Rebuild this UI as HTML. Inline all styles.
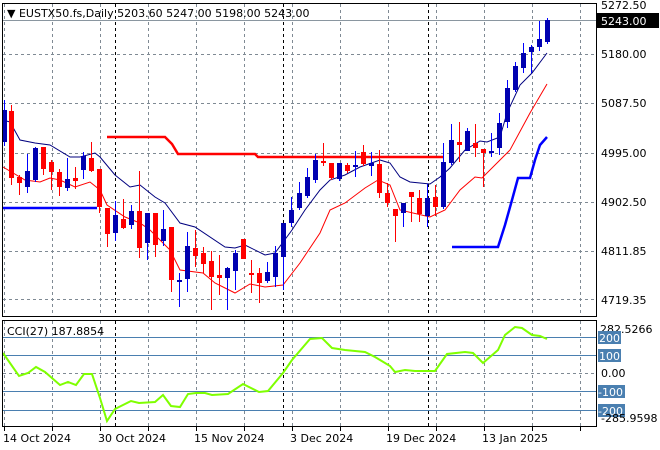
<!DOCTYPE html>
<html><head><meta charset="utf-8"><style>
html,body{margin:0;padding:0;background:#fff;}
svg{display:block;}
text{font-family:"DejaVu Sans","Liberation Sans",sans-serif;font-size:11px;}
</style></head><body>
<svg id="s" width="660" height="450" xmlns="http://www.w3.org/2000/svg">
<rect width="660" height="450" fill="#fff"/>
<g id="grid" stroke="#7f8a94" stroke-dasharray="3,3" stroke-width="1"></g>
<g id="ind"></g>
<g id="c"></g>
<rect x="2.5" y="3.5" width="594" height="313" fill="none" stroke="#000"/>
<rect x="2.5" y="320.5" width="594" height="106" fill="none" stroke="#000"/>
<text x="7" y="17" fill="#000">▼ EUSTX50.fs,Daily  5203.60 5247.00 5198.00 5243.00</text>
<text x="7" y="335" fill="#000">CCI(27) 187.8854</text>
<g fill="#000">
<text x="601" y="9">5272.50</text>
<rect x="597" y="13" width="62" height="15" fill="#000"/>
<text x="601" y="25" fill="#fff">5243.00</text>
<text x="601" y="58">5180.00</text>
<text x="601" y="107">5087.50</text>
<text x="601" y="157">4995.00</text>
<text x="601" y="206">4902.50</text>
<text x="601" y="255">4811.85</text>
<text x="601" y="304">4719.35</text>
<text x="600" y="333">282.5266</text>
<rect x="598" y="331" width="23" height="13" fill="#4a7fb0"/><text x="599" y="342" fill="#fff">200</text>
<rect x="598" y="349" width="23" height="13" fill="#4a7fb0"/><text x="599" y="360" fill="#fff">100</text>
<text x="601" y="377">0.00</text>
<rect x="598" y="385" width="27" height="13" fill="#4a7fb0"/><text x="598" y="396" fill="#fff">-100</text>
<rect x="598" y="404" width="27" height="13" fill="#4a7fb0"/><text x="598" y="415" fill="#fff">-200</text>
<text x="601" y="422">-285.9598</text>
<text x="3" y="442">14 Oct 2024</text>
<text x="98" y="442">30 Oct 2024</text>
<text x="194" y="442">15 Nov 2024</text>
<text x="290" y="442">3 Dec 2024</text>
<text x="386" y="442">19 Dec 2024</text>
<text x="482" y="442">13 Jan 2025</text>
</g>
</svg>
<script>
var NS="http://www.w3.org/2000/svg";
function el(p,t,a){var e=document.createElementNS(NS,t);for(var k in a)e.setAttribute(k,a[k]);p.appendChild(e);return e;}
var g=document.getElementById('grid'),ind=document.getElementById('ind'),c=document.getElementById('c');
[54,103,153,202,251,299].forEach(function(y){el(g,'line',{x1:3,x2:596,y1:y+.5,y2:y+.5});});
[4,52,100,148,196,244,292,340,388,436,484,532,580].forEach(function(x){el(g,'line',{x1:x+.5,x2:x+.5,y1:4,y2:316});el(g,'line',{x1:x+.5,x2:x+.5,y1:321,y2:426});el(ind,'line',{x1:x+.5,x2:x+.5,y1:427,y2:431,stroke:'#000'});});
el(g,'line',{x1:3,x2:596,y1:373.5,y2:373.5});
[115,283,428].forEach(function(x){el(ind,'line',{x1:x+.5,x2:x+.5,y1:4,y2:316,stroke:'#000','stroke-dasharray':'3,3'});el(ind,'line',{x1:x+.5,x2:x+.5,y1:321,y2:426,stroke:'#000','stroke-dasharray':'3,3'});});
[337,355,391,410].forEach(function(y){el(ind,'line',{x1:3,x2:596,y1:y+.5,y2:y+.5,stroke:'#4a7fb0'});});
el(ind,'line',{x1:3,x2:596,y1:20.5,y2:20.5,stroke:'#8a96a0'});
function pl(pts,col,w){el(ind,'polyline',{points:pts,fill:'none',stroke:col,'stroke-width':w});}
pl("3,120 10,122 20,140 35,143 50,145 70,157 80,157 95,153 100,157 115,175 130,187 140,185 155,197 165,203 180,223 195,227 225,247 235,248 245,245 265,255 275,253 292,230 305,210 320,190 330,180 345,175 360,167 380,160 390,163 400,177 410,182 430,184 440,177 450,168 465,150 480,141 487,142 500,137 507,113 520,85 532,73 547,53","#00007f",1);
pl("3,167 25,180 40,182 50,178 60,180 75,187 90,182 100,190 107,205 125,217 140,223 150,230 163,243 170,250 180,270 203,273 215,283 235,293 250,284 265,287 283,285 300,263 320,233 330,210 345,203 365,188 378,180 390,185 400,210 430,217 445,210 460,190 475,177 482,178 500,160 510,150 530,113 547,84","#ff0000",1);
pl("107,137 165,137 172,144 178,154 255,154 258,157 443,157","#ff0000",2.5);
pl("3,208 97,208","#0000ff",2.5);
pl("452,247 498,247 505,225 512,200 518,178 530,178 535,160 540,145 547,137","#0000ff",2.5);
pl("3,353 19,376 28,373 36,367 45,372 60,385 68,382 76,385 84,374 92,374 100,398 107,421 115,409 125,404 131,401 139,403 155,402 163,395 171,406 180,407 188,394 196,393 205,393 212,395 228,394 243,384 259,392 268,391 283,373 292,360 310,339 322,338 332,348 345,350 355,351 365,352 375,357 390,366 395,372 405,370 415,371 435,371 447,354 465,352 473,353 483,363 498,350 505,335 515,327 522,328 532,335 540,336 547,339","#7fff00",2);
var d=[[4,110,142,100,146,1],[11,111,178,105,185,0],[19,177,183,175,195,0],[27,171,187,154,193,1],[35,148,180,147,182,1],[43,147,169,147,175,0],[51,162,172,160,190,0],[59,172,187,169,196,0],[67,179,188,158,191,1],[75,178,181,167,189,0],[83,156,170,152,179,1],[91,158,171,142,172,0],[99,169,207,169,213,0],[107,208,234,208,247,0],[115,215,233,201,241,1],[123,219,228,199,229,0],[131,211,225,205,229,1],[139,211,248,171,258,0],[147,213,243,213,260,1],[155,213,245,213,257,0],[163,229,241,210,246,1],[171,227,280,227,292,0],[179,280,282,273,307,1],[187,246,279,232,292,1],[195,248,256,230,267,0],[203,253,264,247,273,0],[211,261,277,251,310,0],[219,275,278,255,295,0],[227,268,278,267,310,1],[235,253,271,250,290,1],[243,239,259,239,259,0],[251,273,275,260,293,0],[259,273,283,268,303,0],[267,272,281,262,283,1],[275,253,277,246,287,1],[283,223,257,223,290,1],[291,210,223,197,227,1],[299,193,208,182,210,1],[307,177,196,168,198,1],[315,160,180,154,183,1],[323,161,162,143,166,0],[331,163,178,163,180,0],[339,163,179,163,181,1],[347,165,171,163,173,0],[355,165,167,151,177,1],[363,152,164,145,166,0],[371,163,166,152,176,1],[379,164,193,150,198,0],[387,193,203,183,207,0],[395,209,216,209,242,0],[403,203,213,203,227,1],[411,192,197,192,222,0],[419,198,214,190,222,0],[427,198,216,184,227,1],[435,197,207,185,216,0],[443,162,207,143,209,1],[451,140,163,124,165,1],[459,142,145,122,162,0],[467,131,151,128,151,1],[475,143,148,124,157,0],[483,149,153,149,187,0],[491,151,152,133,157,1],[499,123,148,113,155,1],[507,88,122,80,128,1],[515,66,90,62,92,1],[523,53,68,43,73,1],[531,47,52,45,73,1],[539,39,47,21,51,1],[547,20,42,18,44,1]];
d.forEach(function(k){var col=k[5]?'#0000b0':'#ff0000';var wc=k[5]?'#0000ff':'#ff0000';
el(c,'line',{x1:k[0]+.5,x2:k[0]+.5,y1:k[3],y2:k[4],stroke:wc});
el(c,'rect',{x:k[0]-2,y:k[1],width:5,height:Math.max(2,k[2]-k[1]),fill:col});});
</script>
</body></html>
